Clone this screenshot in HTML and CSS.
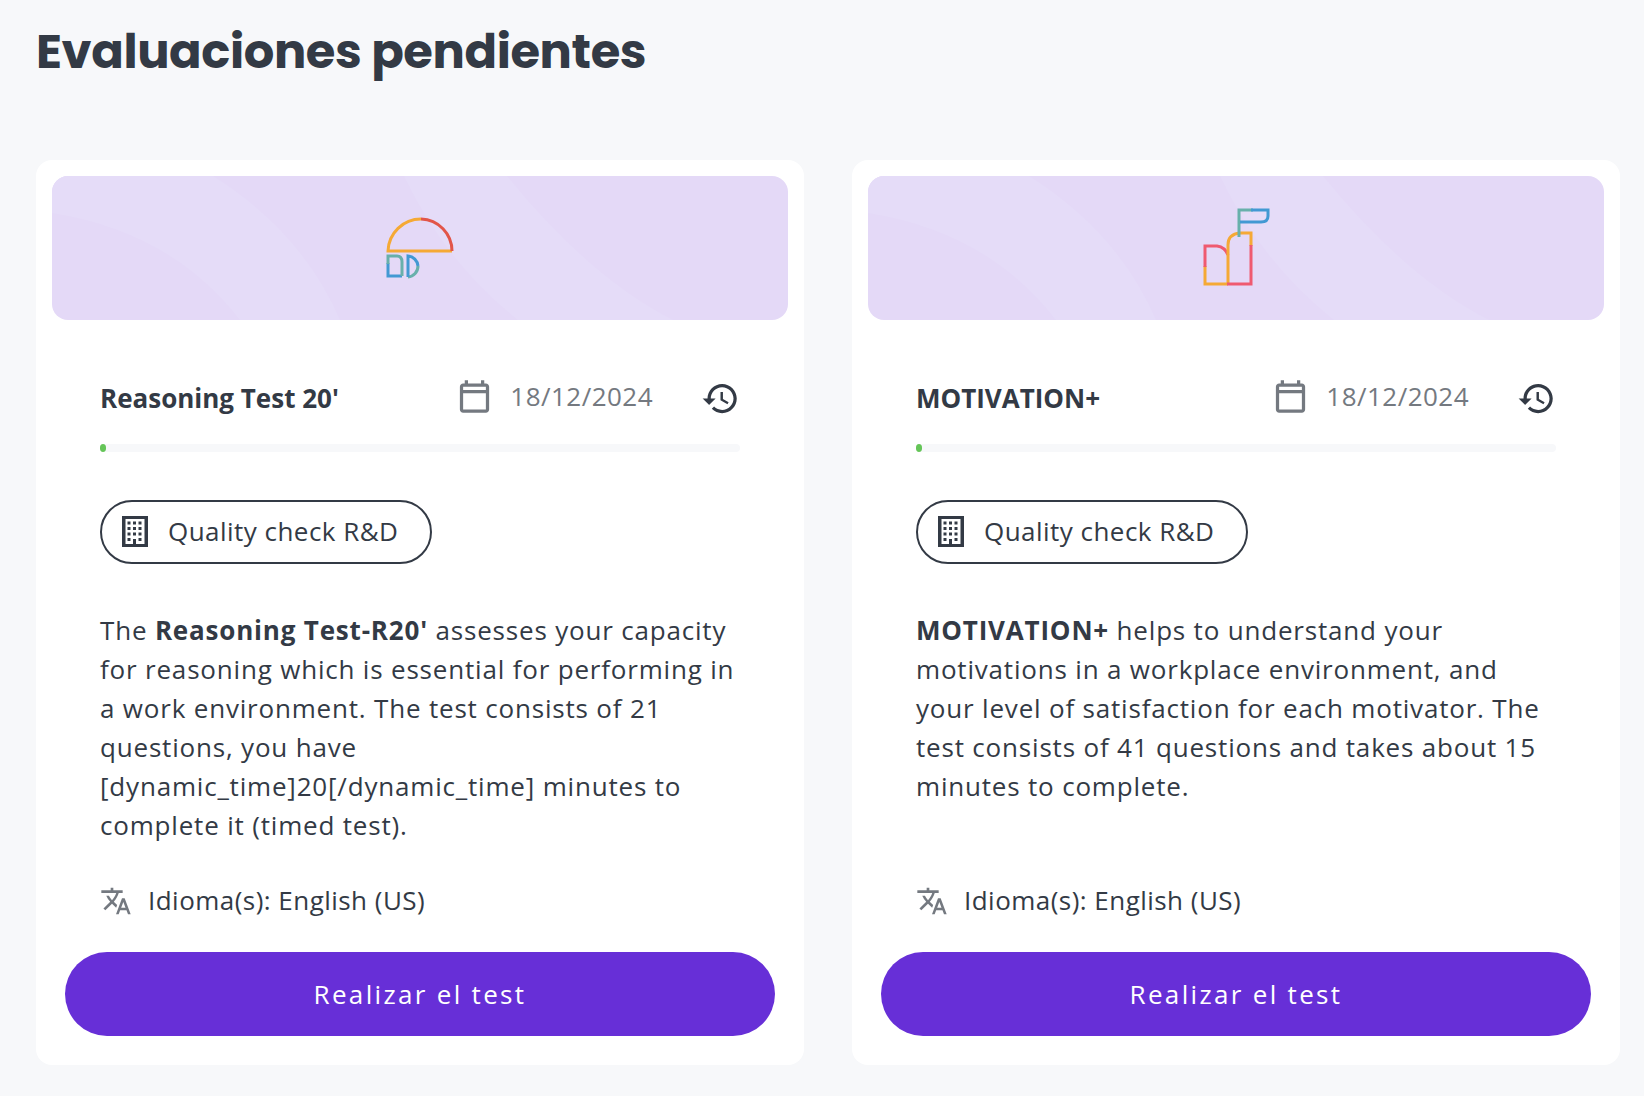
FILE: index.html
```html
<!DOCTYPE html>
<html lang="es">
<head>
    <meta charset="UTF-8">
    <meta name="viewport" content="width=device-width, initial-scale=1.0">
    <title>Evaluaciones pendientes</title>
    <link rel="stylesheet" href="styles.css">
</head>
<body>
    <!-- Iconos compartidos -->
    <svg class="sprite" aria-hidden="true">
        <symbol id="icon-calendar" viewBox="0 0 24 24">
            <path d="M19 4h-1V2h-2v2H8V2H6v2H5c-1.11 0-1.99.9-1.99 2L3 20c0 1.1.89 2 2 2h14c1.1 0 2-.9 2-2V6c0-1.1-.9-2-2-2zm0 16H5V10h14v10zm0-12H5V6h14v2z"/>
        </symbol>
        <symbol id="icon-history" viewBox="0 0 24 24">
            <path d="M13 3c-4.97 0-9 4.03-9 9H1l3.89 3.89.07.14L9 12H6c0-3.87 3.13-7 7-7s7 3.13 7 7-3.13 7-7 7c-1.93 0-3.68-.79-4.94-2.06l-1.42 1.42C8.27 19.99 10.51 21 13 21c4.97 0 9-4.03 9-9s-4.03-9-9-9zm-1 5v5l4.28 2.54.72-1.21-3.5-2.08V8H12z"/>
        </symbol>
        <symbol id="icon-company" viewBox="0 0 26 31">
            <path fill-rule="evenodd" d="M0 0h26v31H0zM3.500 3v25h7.500v-5h3v5h8.500V3z"/>
            <path d="M5.500 5.500h3v3h-3zM11 5.500h3v3h-3zM16.500 5.500h3v3h-3zM5.500 11h3v3h-3zM11 11h3v3h-3zM16.500 11h3v3h-3zM5.500 16.500h3v3h-3zM11 16.500h3v3h-3zM16.500 16.500h3v3h-3zM5.500 22h3v3h-3zM16.500 22h3v3h-3z"/>
        </symbol>
        <symbol id="icon-translate" viewBox="0 0 24 24">
            <path d="M12.870 15.070l-2.540-2.510.03-.03c1.740-1.940 2.980-4.170 3.710-6.530H17V4h-7V2H8v2H1v1.990h11.170C11.500 7.920 10.440 9.750 9 11.350 8.070 10.320 7.300 9.190 6.690 8h-2c.73 1.630 1.730 3.170 2.980 4.560l-5.090 5.020L4 19l5-5 3.110 3.110.76-2.040zM18.500 10h-2L12 22h2l1.120-3h4.750L21 22h2l-4.500-12zm-2.620 7l1.620-4.330L19.120 17h-3.240z"/>
        </symbol>
        <symbol id="banner-waves" viewBox="0 0 736 144" preserveAspectRatio="none">
            <path d="M0 0H161Q250 56 288 144H188Q120 56 0 37z"/>
            <path d="M352 0H455Q538 102 621 144H466Q393 86 352 0z"/>
        </symbol>
    </svg>

    <main class="page">
        <h1 class="page-title">Evaluaciones pendientes</h1>

        <div class="cards">
            <article class="card">
                <div class="banner">
                    <svg class="banner-bg" aria-hidden="true"><use href="#banner-waves"/></svg>
                    <svg class="banner-logo" viewBox="0 -2 100 100" aria-hidden="true">
                        <path class="yellow" d="M51 19A33 33 0 0 0 18 51H82"/>
                        <path class="red" d="M51 19A32 32 0 0 1 82 51"/>
                        <path class="blue" d="M18 63V76H32"/>
                        <path class="teal" d="M18 64V56H27Q32 56 32 62V76"/>
                        <path class="teal" d="M48 66A11 11 0 0 1 38 77"/>
                        <path class="blue" d="M48 66A11 11 0 0 0 38 56V77"/>
                    </svg>
                </div>
                <div class="card-body">
                    <div class="card-head">
                        <h2 class="test-name">Reasoning Test 20'</h2>
                        <div class="deadline">
                            <svg class="icon-date" aria-hidden="true"><use href="#icon-calendar"/></svg>
                            <time datetime="2024-12-18">18/12/2024</time>
                        </div>
                        <svg class="icon-history" aria-hidden="true"><use href="#icon-history"/></svg>
                    </div>
                    <div class="progress"><div class="progress-bar" style="width: 1%"></div></div>
                    <div class="chip">
                        <svg class="icon-company" aria-hidden="true"><use href="#icon-company"/></svg>
                        <span>Quality check R&amp;D</span>
                    </div>
                    <p class="description">The <strong>Reasoning Test-R20'</strong> assesses your capacity for reasoning which is essential for performing in a work environment. The test consists of 21 questions, you have [dynamic_time]20[/dynamic_time] minutes to complete it (timed test).</p>
                    <div class="language">
                        <svg class="icon-language" aria-hidden="true"><use href="#icon-translate"/></svg>
                        <span>Idioma(s): English (US)</span>
                    </div>
                </div>
                <button type="button" class="btn-start">Realizar el test</button>
            </article>

            <article class="card">
                <div class="banner">
                    <svg class="banner-bg" aria-hidden="true"><use href="#banner-waves"/></svg>
                    <svg class="banner-logo" viewBox="-4 3 100 100" aria-hidden="true">
                        <path class="yellow" d="M15 71V89H38"/>
                        <path class="pink" d="M15 72V51H27Q35 52 38 60"/>
                        <path class="yellow" d="M38 89V50Q38 39 50 38H61V51"/>
                        <path class="pink" d="M61 50V89H37"/>
                        <path class="teal" d="M49 42V15H63"/>
                        <path class="blue" d="M61 15H78V21Q78 27 71 27H50"/>
                    </svg>
                </div>
                <div class="card-body">
                    <div class="card-head">
                        <h2 class="test-name">MOTIVATION+</h2>
                        <div class="deadline">
                            <svg class="icon-date" aria-hidden="true"><use href="#icon-calendar"/></svg>
                            <time datetime="2024-12-18">18/12/2024</time>
                        </div>
                        <svg class="icon-history" aria-hidden="true"><use href="#icon-history"/></svg>
                    </div>
                    <div class="progress"><div class="progress-bar" style="width: 1%"></div></div>
                    <div class="chip">
                        <svg class="icon-company" aria-hidden="true"><use href="#icon-company"/></svg>
                        <span>Quality check R&amp;D</span>
                    </div>
                    <p class="description"><strong>MOTIVATION+</strong> helps to understand your motivations in a workplace environment, and your level of satisfaction for each motivator. The test consists of 41 questions and takes about 15 minutes to complete.</p>
                    <div class="language">
                        <svg class="icon-language" aria-hidden="true"><use href="#icon-translate"/></svg>
                        <span>Idioma(s): English (US)</span>
                    </div>
                </div>
                <button type="button" class="btn-start">Realizar el test</button>
            </article>
        </div>
    </main>
</body>
</html>
```
FILE: styles.css
```css
* {
    box-sizing: border-box;
}
body {
    margin: 0;
    background: #f7f8fa;
    color: #333a45;
    font-family: 'Open Sans', 'Noto Sans', sans-serif;
    font-size: 26px;
    line-height: 39px;
}
.sprite {
    display: none;
}
.page {
    padding: 16px 24px 28px 36px;
}
/* letter-spacing: Material type scale (h2, body-1, body-2, button) */
.page-title {
    margin: 0 0 72px;
    font-family: Poppins, Inter, sans-serif;
    font-size: 48px;
    font-weight: 700;
    line-height: 72px;
    letter-spacing: -0.00833em;
}
.cards {
    display: grid;
    grid-template-columns: 1fr 1fr;
    gap: 48px;
}
.card {
    display: flex;
    flex-direction: column;
    padding: 16px 16px 29px;
    background: #fff;
    border-radius: 16px;
}
.banner {
    position: relative;
    display: flex;
    align-items: center;
    justify-content: center;
    height: 144px;
    background: #e4d9f7;
    border-radius: 16px;
    overflow: hidden;
}
.banner-bg {
    position: absolute;
    inset: 0;
    width: 100%;
    height: 100%;
    fill: #e5dcf8;
}
.banner-logo {
    position: relative;
    width: 100px;
    height: 100px;
    fill: none;
    stroke-width: 3;
}
.yellow { stroke: #f5a935; }
.red { stroke: #e25549; }
.pink { stroke: #ef5a70; }
.blue { stroke: #4299d3; }
.teal { stroke: #68b0ab; }

.card-body {
    flex: 1;
    display: flex;
    flex-direction: column;
    padding: 58px 48px 32px;
}
.card-head {
    display: flex;
    align-items: center;
    height: 40px;
}
.test-name {
    flex: 1;
    margin: 0;
    font-size: 26px;
    font-weight: 700;
}
.deadline {
    display: flex;
    align-items: center;
    gap: 16px;
    margin-right: 48px;
    padding-bottom: 3px;
    color: #747980;
    letter-spacing: 0.01786em;
}
.icon-date {
    width: 39px;
    height: 39px;
    fill: #747980;
}
.icon-history {
    width: 39px;
    height: 39px;
    fill: #333a45;
}
.progress {
    height: 8px;
    margin: 26px 0 48px;
    background: #f7f8fa;
    border-radius: 4px;
}
.progress-bar {
    height: 8px;
    background: #65c558;
    border-radius: 50%;
}
.chip {
    display: flex;
    align-items: center;
    align-self: flex-start;
    gap: 20px;
    height: 64px;
    padding: 0 32px 2px 20px;
    border: 2px solid #333a45;
    border-radius: 32px;
    letter-spacing: 0.01786em;
}
.icon-company {
    width: 26px;
    height: 31px;
    fill: #333a45;
}
.description {
    margin: 47px 0 36px;
    letter-spacing: 0.03125em;
}
.language {
    display: flex;
    align-items: center;
    gap: 16px;
    margin-top: auto;
    letter-spacing: 0.01786em;
}
.icon-language {
    width: 32px;
    height: 32px;
    fill: #747980;
}
.btn-start {
    height: 84px;
    margin: 0 13px;
    border: 0;
    border-radius: 42px;
    background: #672fd7;
    color: #fff;
    font: inherit;
    letter-spacing: 0.08929em;
    cursor: pointer;
}
```
